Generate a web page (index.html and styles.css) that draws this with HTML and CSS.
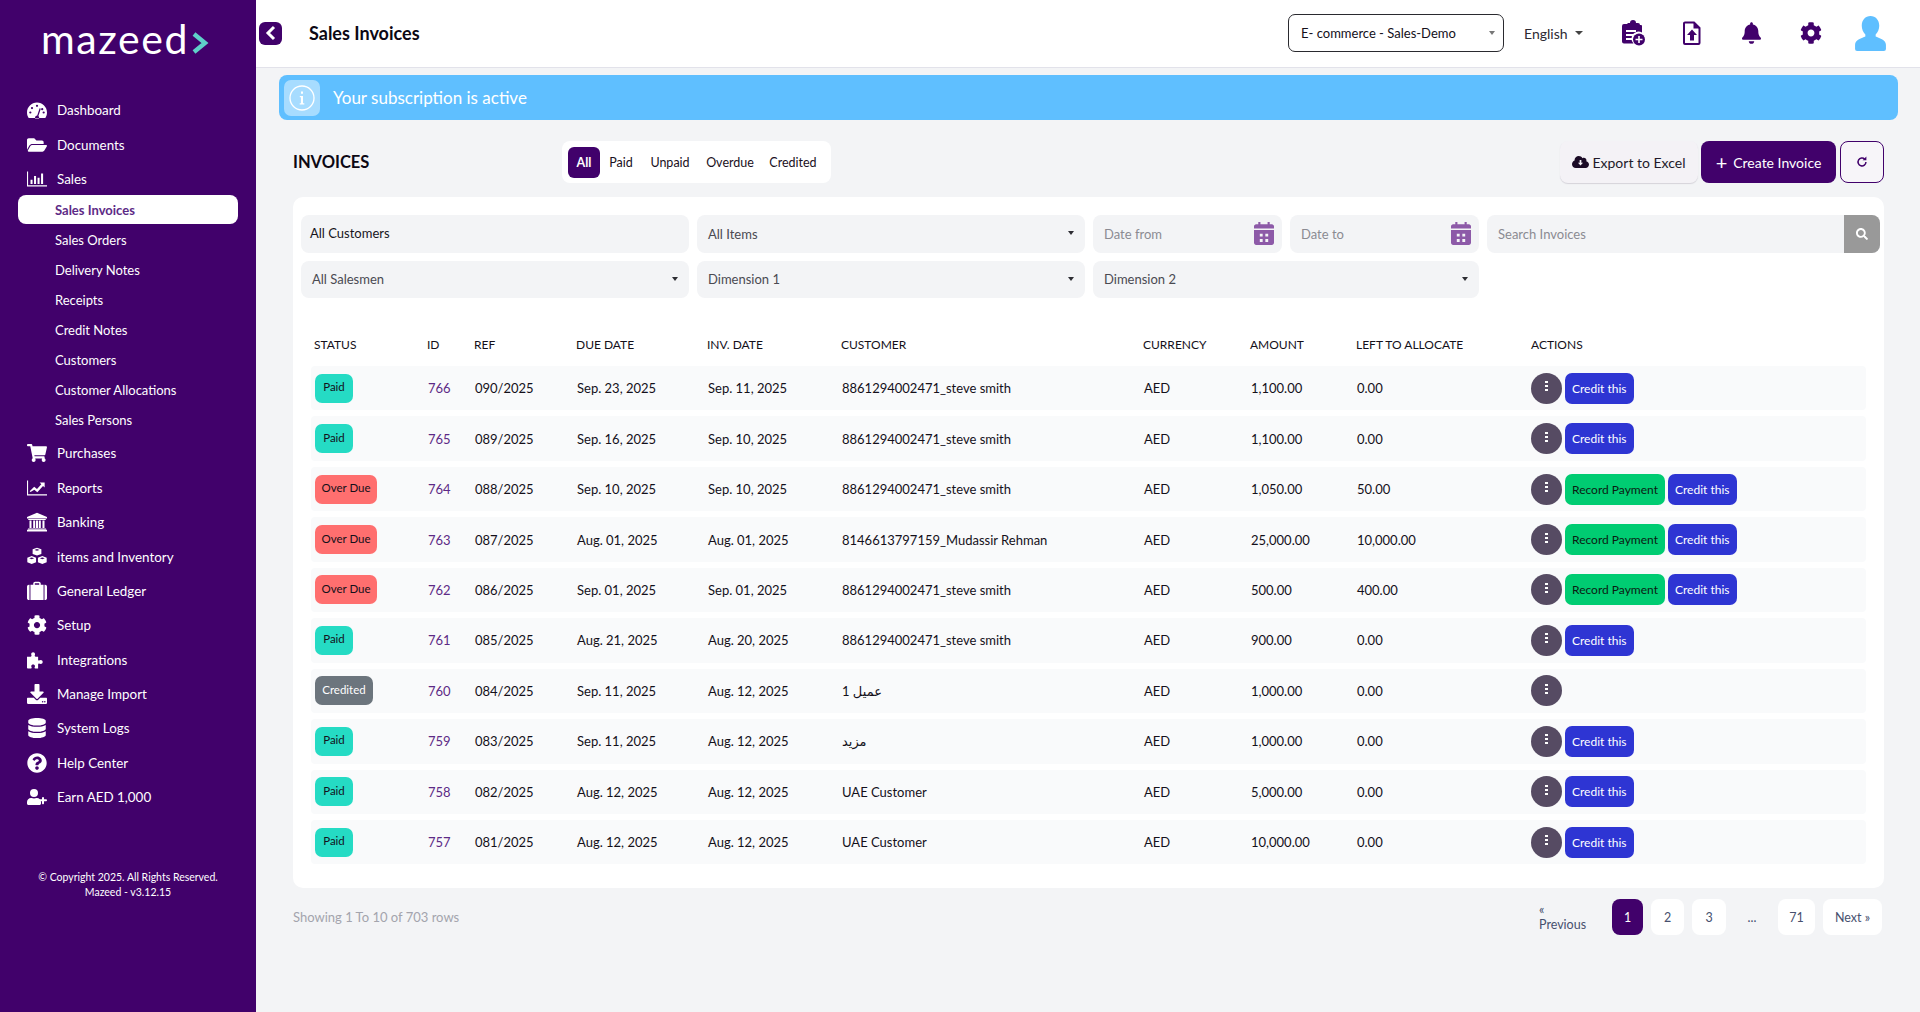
FILE: index.html
```html
<!DOCTYPE html>
<html lang="en">
<head>
<meta charset="utf-8">
<title>Sales Invoices</title>
<link rel="stylesheet" href="styles.css">
</head>
<body>
<svg class="defs" aria-hidden="true">
  <symbol id="i-gauge" viewBox="0 0 576 512"><path fill-rule="evenodd" d="M288 40C129 40 0 169 0 328c0 53 14 102 39 145 6 9 16 15 27 15h444c11 0 21-6 27-15 25-43 39-92 39-145C576 169 447 40 288 40zM288 104a32 32 0 1 1 0 64 32 32 0 0 1 0-64zM96 360a32 32 0 1 1 0-64 32 32 0 0 1 0 64zm48-128a32 32 0 1 1 0-64 32 32 0 0 1 0 64zm246 9l-62 186c14 13 23 31 23 51 0 9-2 17-5 24H236c-3-7-5-15-5-24 0-35 28-64 63-64l65-196c3-8 12-13 20-10 9 3 14 12 11 21zm16-9a32 32 0 1 1 64 0 32 32 0 0 1-64 0zm74 128a32 32 0 1 1 0-64 32 32 0 0 1 0 64z"/></symbol>
  <symbol id="i-folder" viewBox="0 0 576 512"><path d="M572.694 292.093L500.27 416.248A63.997 63.997 0 0 1 444.989 448H45.025c-18.523 0-30.064-20.093-20.731-36.093l72.424-124.155A64 64 0 0 1 152 256h399.964c18.523 0 30.064 20.093 20.73 36.093zM152 224h328v-48c0-26.51-21.49-48-48-48H272l-64-64H48C21.49 64 0 85.49 0 112v278.046l69.077-118.418C86.214 242.25 117.989 224 152 224z"/></symbol>
  <symbol id="i-bars" viewBox="0 0 512 512"><path d="M0 64h28v352h484v32H0zM90 272h52v112H90zM180 176h52v208h-52zM270 224h52v160h-52zM360 112h52v272h-52z"/></symbol>
  <symbol id="i-cart" viewBox="0 0 576 512"><path d="M528.12 301.319l47.273-208C578.806 78.301 567.391 64 551.99 64H159.208l-9.166-44.81C147.758 8.021 137.93 0 126.529 0H24C10.745 0 0 10.745 0 24v16c0 13.255 10.745 24 24 24h69.883l70.248 343.435C147.325 417.1 136 435.222 136 456c0 30.928 25.072 56 56 56s56-25.072 56-56c0-15.674-6.447-29.835-16.824-40h209.647C430.447 426.165 424 440.326 424 456c0 30.928 25.072 56 56 56s56-25.072 56-56c0-22.172-12.888-41.332-31.579-50.405l5.517-24.276c3.413-15.018-8.002-29.319-23.403-29.319H218.117l-6.545-32h293.145c11.206 0 20.92-7.754 23.403-18.681z"/></symbol>
  <symbol id="i-line" viewBox="0 0 512 512"><path d="M0 64h28v352h484v32H0zM90 360l-22-22 116-116 72 60 110-122-42-42h128v128l-42-42-146 160-76-62z"/></symbol>
  <symbol id="i-bank" viewBox="0 0 512 512"><path d="M256 16L0 128v36h512v-36zM32 176h448v28H32zM64 216h52v192H64zM158 216h52v192h-52zM302 216h52v192h-52zM396 216h52v192h-52zM230 216h52v192h-52zM24 420h464v28H24zM0 456h512v40H0z"/></symbol>
  <symbol id="i-cubes" viewBox="0 0 512 512"><path fill-rule="evenodd" d="M256 16l112 42v118l-112 42-112-42V58zM256 50l-64 24 64 24 64-24zM120 232l112 42v118l-112 42L8 392V274zM120 266l-64 24 64 24 64-24zM392 232l112 42v118l-112 42-112-42V274zM392 266l-64 24 64 24 64-24z"/></symbol>
  <symbol id="i-case" viewBox="0 0 512 512"><path fill-rule="evenodd" d="M160 96V64c0-26 22-48 48-48h96c26 0 48 22 48 48v32h72v392H88V96zM200 96h112V64c0-4-4-8-8-8h-96c-4 0-8 4-8 8zM0 144c0-26 22-48 48-48h16v392H48c-26 0-48-22-48-48zM448 96h16c26 0 48 22 48 48v296c0 26-22 48-48 48h-16z"/></symbol>
  <symbol id="i-cog" viewBox="0 0 512 512"><path d="M487.4 315.7l-42.6-24.6c4.3-23.2 4.3-47 0-70.2l42.6-24.6c4.9-2.8 7.1-8.6 5.5-14-11.1-35.6-30-67.8-54.7-94.6-3.8-4.1-10-5.1-14.8-2.3L380.8 110c-17.9-15.4-38.5-27.3-60.8-35.1V25.8c0-5.6-3.9-10.5-9.4-11.7-36.7-8.2-74.3-7.8-109.2 0-5.5 1.2-9.4 6.1-9.4 11.7V75c-22.2 7.9-42.8 19.8-60.8 35.1L88.7 85.5c-4.9-2.8-11-1.9-14.8 2.3-24.7 26.7-43.6 58.9-54.7 94.6-1.7 5.4.6 11.2 5.5 14L67.3 221c-4.3 23.2-4.3 47 0 70.2l-42.6 24.6c-4.9 2.8-7.1 8.6-5.5 14 11.1 35.6 30 67.8 54.7 94.6 3.8 4.1 10 5.1 14.8 2.3l42.6-24.6c17.9 15.4 38.5 27.3 60.8 35.1v49.2c0 5.6 3.9 10.5 9.4 11.7 36.7 8.2 74.3 7.8 109.2 0 5.5-1.2 9.4-6.1 9.4-11.7v-49.2c22.2-7.9 42.8-19.8 60.8-35.1l42.6 24.6c4.9 2.8 11 1.9 14.8-2.3 24.7-26.7 43.6-58.9 54.7-94.6 1.5-5.5-.7-11.3-5.6-14.1zM256 336c-44.1 0-80-35.9-80-80s35.9-80 80-80 80 35.9 80 80-35.9 80-80 80z"/></symbol>
  <symbol id="i-puzzle" viewBox="0 0 576 512"><path d="M176 32c32 0 56 24 56 56 0 20-12 32-12 48 0 12 10 24 28 24h72v88c0 16 12 24 24 24 18 0 30-14 52-14 32 0 56 26 56 58s-24 58-56 58c-22 0-34-14-52-14-12 0-24 8-24 24v120H240c-14 0-24-10-24-24 0-16 14-26 14-46 0-28-24-48-54-48s-54 20-54 48c0 20 14 30 14 46 0 14-10 24-24 24H24c-14 0-24-10-24-24V160h104c18 0 28-12 28-24 0-16-12-28-12-48 0-32 24-56 56-56z"/></symbol>
  <symbol id="i-import" viewBox="0 0 512 512"><path d="M216 0h80c13 0 24 11 24 24v168h88c18 0 27 22 14 34L270 378c-8 8-20 8-28 0L90 226c-13-12-4-34 14-34h88V24c0-13 11-24 24-24z"/><path fill-rule="evenodd" d="M24 352h150l50 50c18 18 46 18 64 0l50-50h150c13 0 24 11 24 24v112c0 13-11 24-24 24H24c-13 0-24-11-24-24V376c0-13 11-24 24-24zM400 432a20 20 0 1 0 0 40 20 20 0 0 0 0-40zM456 432a20 20 0 1 0 0 40 20 20 0 0 0 0-40z"/></symbol>
  <symbol id="i-db" viewBox="0 0 448 512"><path d="M448 73v46C448 159 348 192 224 192S0 159 0 119V73C0 33 100 0 224 0s224 33 224 73zM448 176v103c0 40-100 73-224 73S0 319 0 279V176c48 33 136 48 224 48s176-15 224-48zM448 336v103c0 40-100 73-224 73S0 479 0 439V336c48 33 136 48 224 48s176-15 224-48z"/></symbol>
  <symbol id="i-help" viewBox="0 0 512 512"><path d="M504 256c0 136.997-111.043 248-248 248S8 392.997 8 256C8 119.083 119.043 8 256 8s248 111.083 248 248zM262.655 90c-54.497 0-89.255 22.957-116.549 63.758-3.536 5.286-2.353 12.415 2.715 16.258l34.699 26.31c5.205 3.947 12.621 3.008 16.665-2.122 17.864-22.658 30.113-35.797 57.303-35.797 20.429 0 45.698 13.148 45.698 32.958 0 14.976-12.363 22.667-32.534 33.976C247.128 238.528 216 254.941 216 296v4c0 6.627 5.373 12 12 12h56c6.627 0 12-5.373 12-12v-1.333c0-28.462 83.186-29.647 83.186-106.667 0-58.002-60.165-102-116.531-102zM256 338c-25.365 0-46 20.635-46 46 0 25.364 20.635 46 46 46s46-20.636 46-46c0-25.365-20.635-46-46-46z"/></symbol>
  <symbol id="i-userplus" viewBox="0 0 640 512"><path d="M224 256a128 128 0 1 0 0-256 128 128 0 0 0 0 256zM320 288h-17c-22 10-47 16-79 16s-57-6-79-16h-17C57 288 0 345 0 416v48c0 27 21 48 48 48h352c27 0 48-21 48-48v-48c0-71-57-128-128-128z"/><path d="M480 264h64v64h64c10 0 32 8 32 32s-22 32-32 32h-64v64c0 14-12 32-32 32s-32-18-32-32v-64h-64c-14 0-32-12-32-32s18-32 32-32h64z" stroke="#41016b" stroke-width="0"/></symbol>
  <symbol id="i-bell" viewBox="0 0 448 512"><path d="M224 512c35.32 0 63.97-28.65 63.97-64H160.03c0 35.35 28.65 64 63.97 64zm215.39-149.71c-19.32-20.76-55.47-51.99-55.47-154.29 0-77.7-54.48-139.9-127.94-155.16V32c0-17.67-14.32-32-31.98-32s-31.98 14.33-31.98 32v20.84C118.56 68.1 64.08 130.3 64.08 208c0 102.3-36.15 133.53-55.47 154.29-6 6.45-8.66 14.16-8.61 21.71.11 16.4 12.98 32 32.1 32h383.8c19.12 0 32-15.6 32.1-32 .05-7.55-2.61-15.27-8.61-21.71z"/></symbol>
  <symbol id="i-search" viewBox="0 0 512 512"><path d="M505 442.7L405.3 343c-4.5-4.5-10.6-7-17-7H372c27.6-35.3 44-79.7 44-128C416 93.1 322.9 0 208 0S0 93.1 0 208s93.1 208 208 208c48.3 0 92.7-16.4 128-44v16.3c0 6.4 2.5 12.5 7 17l99.7 99.7c9.4 9.4 24.6 9.4 33.9 0l28.3-28.3c9.4-9.4 9.4-24.6.1-34zM208 336c-70.7 0-128-57.2-128-128 0-70.7 57.2-128 128-128 70.7 0 128 57.2 128 128 0 70.7-57.2 128-128 128z"/></symbol>
  <symbol id="i-cal" viewBox="0 0 448 512"><path fill-rule="evenodd" d="M96 0h48v48h160V0h48v48h48c26 0 48 22 48 48v48H0V96c0-26 22-48 48-48h48zM0 176h448v288c0 26-22 48-48 48H48c-26 0-48-22-48-48zM130 260v64h64v-64zM254 260v64h64v-64zM130 380v64h64v-64zM254 380v64h64v-64z"/></symbol>
</svg>

<div class="app">
  <aside class="sidebar">
    <div class="logo"><span class="logo-text">mazeed</span><svg class="logo-mark" viewBox="0 0 17 22"><path d="M2 2l11 9-11 9" fill="none" stroke="#5fd0c9" stroke-width="4.4"/></svg></div>
    <nav class="nav">
      <a class="nav-item"><svg class="nav-ico"><use href="#i-gauge"/></svg>Dashboard</a>
      <a class="nav-item"><svg class="nav-ico"><use href="#i-folder"/></svg>Documents</a>
      <a class="nav-item"><svg class="nav-ico"><use href="#i-bars"/></svg>Sales</a>
      <div class="subnav">
        <a class="sub-item active">Sales Invoices</a>
        <a class="sub-item">Sales Orders</a>
        <a class="sub-item">Delivery Notes</a>
        <a class="sub-item">Receipts</a>
        <a class="sub-item">Credit Notes</a>
        <a class="sub-item">Customers</a>
        <a class="sub-item">Customer Allocations</a>
        <a class="sub-item">Sales Persons</a>
      </div>
      <a class="nav-item"><svg class="nav-ico"><use href="#i-cart"/></svg>Purchases</a>
      <a class="nav-item"><svg class="nav-ico"><use href="#i-line"/></svg>Reports</a>
      <a class="nav-item"><svg class="nav-ico"><use href="#i-bank"/></svg>Banking</a>
      <a class="nav-item"><svg class="nav-ico"><use href="#i-cubes"/></svg>items and Inventory</a>
      <a class="nav-item"><svg class="nav-ico"><use href="#i-case"/></svg>General Ledger</a>
      <a class="nav-item"><svg class="nav-ico"><use href="#i-cog"/></svg>Setup</a>
      <a class="nav-item"><svg class="nav-ico"><use href="#i-puzzle"/></svg>Integrations</a>
      <a class="nav-item"><svg class="nav-ico"><use href="#i-import"/></svg>Manage Import</a>
      <a class="nav-item"><svg class="nav-ico"><use href="#i-db"/></svg>System Logs</a>
      <a class="nav-item"><svg class="nav-ico"><use href="#i-help"/></svg>Help Center</a>
      <a class="nav-item"><svg class="nav-ico"><use href="#i-userplus"/></svg>Earn AED 1,000</a>
    </nav>
    <div class="copyright">© Copyright 2025. All Rights Reserved.<br>Mazeed - v3.12.15</div>
  </aside>

  <main class="main">
    <header class="topbar">
      <button class="collapse"><svg viewBox="0 0 12 16" class="collapse-ico"><path d="M9 2L3 8l6 6" fill="none" stroke="#fff" stroke-width="3"/></svg></button>
      <h1 class="page-title">Sales Invoices</h1>
      <div class="company">E- commerce - Sales-Demo<span class="caret caret-grey"></span></div>
      <div class="lang">English<span class="caret caret-dark"></span></div>
      <div class="top-icons">
        <svg class="top-ico ti-clip" viewBox="0 0 24 26"><path fill="#41016b" d="M7 3h2a3 3 0 0 1 6 0h2a2 2 0 0 1 2 2h1a1 1 0 0 1 1 1v6.5a7 7 0 0 0-8.5 11H3a2 2 0 0 1-2-2V6a2 2 0 0 1 2-2h3z"/><path fill="#fff" d="M5 10h10v2H5zM5 14h10v2H5zM5 18h6v2H5z"/><circle cx="18" cy="19.5" r="6" fill="#41016b"/><path fill="#fff" d="M17.2 16h1.6v2.7h2.7v1.6h-2.7V23h-1.6v-2.7h-2.7v-1.6h2.7z"/></svg>
        <svg class="top-ico ti-file" viewBox="0 0 18 24"><path fill="none" stroke="#41016b" stroke-width="2" d="M2 1.5h9l5.5 5.5v15a1 1 0 0 1-1 1H2a1 1 0 0 1-1-1v-19.500a1 1 0 0 1 1-1z"/><path fill="#41016b" d="M10.500 1.500v6h6zM9 8.500l5 5.500h-3v5.500H7V14H4z"/></svg>
        <svg class="top-ico ti-bell" fill="#41016b"><use href="#i-bell"/></svg>
        <svg class="top-ico ti-cog" fill="#41016b"><use href="#i-cog"/></svg>
        <svg class="top-ico ti-user" viewBox="0 0 30 34"><path fill="#5fbfff" d="M15 0c5 0 8.500 4 8.500 9.500 0 3.500-1.500 6.500-3.500 8.500v2c3 1.500 10 3 10 8v4a2 2 0 0 1-2 2H2a2 2 0 0 1-2-2v-4c0-5 7-6.500 10-8v-2c-2-2-3.500-5-3.500-8.500C6.500 4 10 0 15 0z"/></svg>
      </div>
    </header>

    <div class="banner">
      <span class="banner-ico"><svg viewBox="0 0 28 28"><circle cx="14" cy="14" r="12" fill="none" stroke="#fff" stroke-width="1.300"/><path fill="#fff" d="M13 7.500h2v2.200h-2zM11.800 12h3.200v7.300h1.300v1.200h-4.600v-1.200h1.200V13.200h-1.100z"/></svg></span>
      <span>Your subscription is active</span>
    </div>

    <section class="toolbar">
      <h2 class="section-title">INVOICES</h2>
      <div class="tabs">
        <a class="tab tab-all on">All</a>
        <a class="tab tab-paid">Paid</a>
        <a class="tab tab-unpaid">Unpaid</a>
        <a class="tab tab-overdue">Overdue</a>
        <a class="tab tab-credited">Credited</a>
      </div>
      <div class="tool-actions">
        <button class="btn-export"><svg viewBox="0 0 640 512" class="cloud"><path fill="#1b0b26" fill-rule="evenodd" d="M537.600 226.600c4.100-10.700 6.400-22.400 6.400-34.600 0-53-43-96-96-96-19.700 0-38.100 6-53.300 16.200C367 64.200 315.300 32 256 32c-88.400 0-160 71.600-160 160 0 2.700.1 5.400.2 8.100C40.200 219.800 0 273.200 0 336c0 79.500 64.500 144 144 144h368c70.700 0 128-57.300 128-128 0-61.900-44-113.600-102.400-125.400zM288 184v104h-64l96 96 96-96h-64V184z"/></svg>Export to Excel</button>
        <button class="btn-create"><span class="plus">+</span>Create Invoice</button>
        <button class="btn-refresh"><svg viewBox="0 0 16 16" class="refresh"><path d="M12.500 8a4.500 4.500 0 1 1-1.300-3.200" fill="none" stroke="#41016b" stroke-width="1.700"/><path d="M13 1.800v4.300H8.700z" fill="#41016b"/></svg></button>
      </div>
    </section>

    <section class="card">
      <div class="filters">
        <div class="field field-strong">All Customers</div>
        <div class="field">All Items<span class="caret caret-small"></span></div>
        <div class="field muted">Date from<svg class="cal" fill="#8d5aa8"><use href="#i-cal"/></svg></div>
        <div class="field muted">Date to<svg class="cal" fill="#8d5aa8"><use href="#i-cal"/></svg></div>
        <div class="field muted search">Search Invoices<span class="search-btn"><svg class="search-ico" fill="#fff"><use href="#i-search"/></svg></span></div>
        <div class="field">All Salesmen<span class="caret caret-small"></span></div>
        <div class="field">Dimension 1<span class="caret caret-small"></span></div>
        <div class="field span2">Dimension 2<span class="caret caret-small"></span></div>
      </div>

      <div class="table">
        <div class="cols thead"><span>STATUS</span><span>ID</span><span>REF</span><span>DUE DATE</span><span>INV. DATE</span><span>CUSTOMER</span><span>CURRENCY</span><span>AMOUNT</span><span>LEFT TO ALLOCATE</span><span>ACTIONS</span></div>

        <div class="cols row"><span><b class="badge paid">Paid</b></span><a class="id">766</a><span>090/2025</span><span>Sep. 23, 2025</span><span>Sep. 11, 2025</span><span>8861294002471_steve smith</span><span>AED</span><span>1,100.00</span><span>0.00</span><div class="acts"><button class="dots"><i></i><i></i><i></i></button><button class="act credit">Credit this</button></div></div>
        <div class="cols row"><span><b class="badge paid">Paid</b></span><a class="id">765</a><span>089/2025</span><span>Sep. 16, 2025</span><span>Sep. 10, 2025</span><span>8861294002471_steve smith</span><span>AED</span><span>1,100.00</span><span>0.00</span><div class="acts"><button class="dots"><i></i><i></i><i></i></button><button class="act credit">Credit this</button></div></div>
        <div class="cols row"><span><b class="badge over">Over Due</b></span><a class="id">764</a><span>088/2025</span><span>Sep. 10, 2025</span><span>Sep. 10, 2025</span><span>8861294002471_steve smith</span><span>AED</span><span>1,050.00</span><span>50.00</span><div class="acts"><button class="dots"><i></i><i></i><i></i></button><button class="act record">Record Payment</button><button class="act credit">Credit this</button></div></div>
        <div class="cols row"><span><b class="badge over">Over Due</b></span><a class="id">763</a><span>087/2025</span><span>Aug. 01, 2025</span><span>Aug. 01, 2025</span><span>8146613797159_Mudassir Rehman</span><span>AED</span><span>25,000.00</span><span>10,000.00</span><div class="acts"><button class="dots"><i></i><i></i><i></i></button><button class="act record">Record Payment</button><button class="act credit">Credit this</button></div></div>
        <div class="cols row"><span><b class="badge over">Over Due</b></span><a class="id">762</a><span>086/2025</span><span>Sep. 01, 2025</span><span>Sep. 01, 2025</span><span>8861294002471_steve smith</span><span>AED</span><span>500.00</span><span>400.00</span><div class="acts"><button class="dots"><i></i><i></i><i></i></button><button class="act record">Record Payment</button><button class="act credit">Credit this</button></div></div>
        <div class="cols row"><span><b class="badge paid">Paid</b></span><a class="id">761</a><span>085/2025</span><span>Aug. 21, 2025</span><span>Aug. 20, 2025</span><span>8861294002471_steve smith</span><span>AED</span><span>900.00</span><span>0.00</span><div class="acts"><button class="dots"><i></i><i></i><i></i></button><button class="act credit">Credit this</button></div></div>
        <div class="cols row"><span><b class="badge credited">Credited</b></span><a class="id">760</a><span>084/2025</span><span>Sep. 11, 2025</span><span>Aug. 12, 2025</span><span>عميل 1</span><span>AED</span><span>1,000.00</span><span>0.00</span><div class="acts"><button class="dots"><i></i><i></i><i></i></button></div></div>
        <div class="cols row"><span><b class="badge paid">Paid</b></span><a class="id">759</a><span>083/2025</span><span>Sep. 11, 2025</span><span>Aug. 12, 2025</span><span>مزيد</span><span>AED</span><span>1,000.00</span><span>0.00</span><div class="acts"><button class="dots"><i></i><i></i><i></i></button><button class="act credit">Credit this</button></div></div>
        <div class="cols row"><span><b class="badge paid">Paid</b></span><a class="id">758</a><span>082/2025</span><span>Aug. 12, 2025</span><span>Aug. 12, 2025</span><span>UAE Customer</span><span>AED</span><span>5,000.00</span><span>0.00</span><div class="acts"><button class="dots"><i></i><i></i><i></i></button><button class="act credit">Credit this</button></div></div>
        <div class="cols row"><span><b class="badge paid">Paid</b></span><a class="id">757</a><span>081/2025</span><span>Aug. 12, 2025</span><span>Aug. 12, 2025</span><span>UAE Customer</span><span>AED</span><span>10,000.00</span><span>0.00</span><div class="acts"><button class="dots"><i></i><i></i><i></i></button><button class="act credit">Credit this</button></div></div>
      </div>
    </section>

    <footer class="pager-row">
      <span class="showing">Showing 1 To 10 of 703 rows</span>
      <div class="pager">
        <a class="pg pg-prev">« Previous</a>
        <a class="pg pg-box pg-on pg-1">1</a>
        <a class="pg pg-box pg-2">2</a>
        <a class="pg pg-box pg-3">3</a>
        <a class="pg pg-gap">...</a>
        <a class="pg pg-box pg-71">71</a>
        <a class="pg pg-box pg-next">Next »</a>
      </div>
    </footer>
  </main>
</div>
</body>
</html>
```

FILE: styles.css
```css
* { box-sizing: border-box; }
html, body { margin: 0; height: 100%; }
body {
  font-family: "Lato", "DejaVu Sans", sans-serif;
  font-size: 13px;
  color: #14101a;
  background: #f3f4f6;
  overflow: hidden;
}
button { font-family: inherit; border: 0; padding: 0; cursor: pointer; }
.defs { position: absolute; width: 0; height: 0; }

.app { display: flex; height: 1012px; }

/* Sidebar */
.sidebar { width: 256px; flex: none; background: #41016b; color: #fff; }
.logo { display: flex; align-items: center; height: 93px; padding: 0 0 16px 41px; gap: 3px; }
.logo-text { font-size: 41px; line-height: 1; font-weight: 400; letter-spacing: 1.6px; color: #fff; }
.logo-mark { width: 17px; height: 22px; margin-top: 8px; }
.nav { display: flex; flex-direction: column; }
.nav-item { display: flex; align-items: center; height: 34.4px; padding-left: 27px; font-size: 13.4px; color: #fff; }
.nav-ico { width: 20px; height: 20px; margin-right: 10px; fill: #fff; flex: none; }
.subnav { display: flex; flex-direction: column; margin: -1px 0 1px; }
.sub-item { display: flex; align-items: center; height: 29px; margin: 0 18px 1px; padding-left: 37px; font-size: 13px; color: #fff; border-radius: 8px; }
.sub-item.active { background: #fff; color: #5d2a86; font-weight: 700; }
.copyright { margin-top: 56px; text-align: center; font-size: 10.5px; line-height: 15px; color: #fff; }

/* Main */
.main { flex: 1; min-width: 0; display: flex; flex-direction: column; }
.topbar { display: flex; align-items: center; height: 68px; flex: none; background: #fff; border-bottom: 1px solid #e2e2ea; padding: 0 34px 1px 3px; }
.collapse { width: 23px; height: 23px; border-radius: 6px; background: #41016b; display: flex; align-items: center; justify-content: center; }
.collapse-ico { width: 12px; height: 16px; }
.page-title { margin: 0 0 0 27px; font-size: 18px; font-weight: 700; color: #0c0814; flex: 1; }
.company { position: relative; width: 216px; height: 38px; border: 1px solid #2a2a2f; border-radius: 7px; display: flex; align-items: center; padding-left: 12px; font-size: 13px; }
.caret { display: inline-block; width: 0; height: 0; border-left: 3.5px solid transparent; border-right: 3.5px solid transparent; border-top: 4px solid #333; }
.caret-grey { position: absolute; right: 8px; top: 16px; border-top-color: #777; }
.lang { display: flex; align-items: center; gap: 7px; margin-left: 20px; width: 66px; font-size: 14px; color: #2d2a33; }
.caret-dark { border-left-width: 4px; border-right-width: 4px; border-top-color: #444; }
.top-icons { display: flex; align-items: center; margin-left: 31px; }
.top-ico { flex: none; }
.ti-clip { width: 24px; height: 26px; }
.ti-file { width: 18px; height: 24px; margin-left: 38px; }
.ti-bell { width: 19px; height: 22px; margin-left: 41px; }
.ti-cog { width: 22px; height: 22px; margin-left: 39px; }
.ti-user { width: 31px; height: 35px; margin-left: 33px; }

.banner { display: flex; align-items: center; gap: 13px; margin: 7px 22px 0 23px; height: 45px; padding-left: 5px; border-radius: 8px; background: #5fbfff; color: #fff; font-size: 17px; }
.banner-ico { width: 36px; height: 36px; border-radius: 7px; background: rgba(255,255,255,.45); display: flex; align-items: center; justify-content: center; }
.banner-ico svg { width: 28px; height: 28px; }

.toolbar { display: flex; align-items: center; height: 42px; margin: 21px 36px 0 37px; position: relative; }
.section-title { margin: 0; width: 269px; font-size: 16.5px; font-weight: 700; color: #0c0814; }
.tabs { display: flex; align-items: center; height: 42px; width: 269px; padding-left: 6px; background: #fff; border-radius: 8px; }
.tab { display: flex; align-items: center; justify-content: center; height: 31px; font-size: 12.5px; color: #1a1022; }
.tab.on { background: #41016b; color: #fff; border-radius: 6px; font-weight: 700; }
.tab-all { width: 32px; }
.tab-paid { width: 42px; }
.tab-unpaid { width: 56px; }
.tab-overdue { width: 64px; }
.tab-credited { width: 62px; }
.tool-actions { display: flex; margin-left: auto; height: 42px; }
.btn-export { width: 138px; background: #f4f2f6; border-radius: 8px; box-shadow: 0 1px 1px #d5d3da; display: flex; align-items: center; justify-content: center; gap: 3px; font-size: 14px; color: #221a2a; }
.cloud { width: 17px; height: 14px; }
.btn-create { width: 135px; margin-left: 3px; background: #41016b; border-radius: 8px; color: #fff; font-size: 14px; display: flex; align-items: center; justify-content: center; }
.plus { font-size: 20px; line-height: 1; margin-right: 6px; font-weight: 400; }
.btn-refresh { width: 44px; margin-left: 4px; background: #f7f5f9; border: 1px solid #41016b; border-radius: 8px; display: flex; align-items: center; justify-content: center; }
.refresh { width: 14px; height: 14px; }

.card { margin: 14px 36px 0 37px; height: 691px; padding: 18px 18px 0; background: #fff; border-radius: 10px; }
.filters { display: grid; grid-template-columns: 388px 388px 189px 189px 393px; row-gap: 8px; column-gap: 8px; margin: 0 -14px 0 -10px; grid-auto-rows: 37.500px; }
.field { position: relative; display: flex; align-items: center; padding-left: 11px; border-radius: 8px; background: #f3f4f6; font-size: 13px; color: #4a4a52; }
.field-strong { color: #17141c; padding-left: 9px; padding-bottom: 2px; }
.field.muted { color: #8b8b92; }
.field.search { padding-left: 11px; overflow: hidden; }
.span2 { grid-column: span 2; }
.caret-small { position: absolute; right: 11px; top: 16px; border-left-width: 3px; border-right-width: 3px; border-top-color: #2d2d33; }
.cal { position: absolute; right: 8px; top: 7px; width: 20px; height: 23px; }
.search-btn { position: absolute; right: 0; top: 0; bottom: 0; width: 36px; background: #999; display: flex; align-items: center; justify-content: center; }
.search-ico { width: 12px; height: 12px; }

.table { margin-top: 30px; }
.cols { display: grid; grid-template-columns: 113px 47px 102px 131px 134px 302px 107px 106px 175px 1fr; align-items: center; }
.thead { height: 32px; font-size: 12px; color: #14101a; }
.thead > span { padding-left: 3px; }
.row { height: 44.440px; margin-top: 6px; background: #f9fafb; border-radius: 4px; font-size: 13px; color: #14101a; }
.row > span, .row > a { padding-left: 4px; }
.id { color: #5d2a86; }
.badge { display: inline-flex; align-items: center; justify-content: center; height: 29px; padding: 0 8px 3px; border-radius: 7px; font-size: 11.5px; font-weight: 400; }
.paid { background: #25dbc4; width: 38px; padding: 0 0 3px; }
.over { background: #ff6f6f; width: 62px; padding: 0 0 3px; }
.credited { background: #6c757d; color: #fff; width: 58px; padding: 0 0 3px; }
.acts { display: flex; align-items: center; gap: 3px; padding-left: 3px; }
.dots { width: 31px; height: 31px; border-radius: 50%; background: #564b63; display: flex; flex-direction: column; align-items: center; justify-content: center; gap: 2px; padding-bottom: 4px; }
.dots i { display: block; width: 3px; height: 2px; background: #fff; }
.act { height: 31px; border-radius: 7px; font-size: 12px; }
.credit { width: 68.500px; background: #2e35d3; color: #fff; }
.record { width: 100px; background: #00cc72; color: #0c1a12; }

.pager-row { display: flex; align-items: center; height: 36px; margin: 11px 38px 0 37px; }
.showing { color: #a3a4ad; font-size: 13px; }
.pager { display: flex; margin-left: auto; align-items: stretch; height: 36px; }
.pg { display: flex; align-items: center; justify-content: center; font-size: 12.5px; color: #47506e; }
.pg-box { background: #fff; border-radius: 8px; }
.pg-on { background: #41016b; color: #fff; }
.pg-prev { width: 52px; margin-right: 21px; }
.pg-1 { width: 31px; margin-right: 8px; }
.pg-2 { width: 33px; margin-right: 8px; }
.pg-3 { width: 34px; }
.pg-gap { width: 52px; }
.pg-71 { width: 37px; margin-right: 8px; }
.pg-next { width: 59px; }
```
